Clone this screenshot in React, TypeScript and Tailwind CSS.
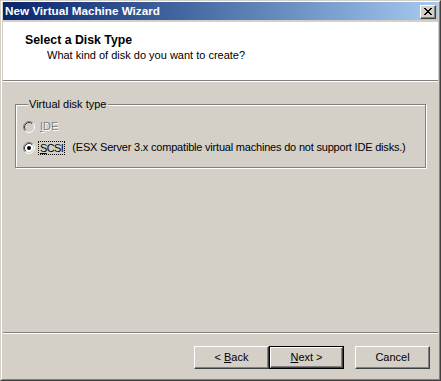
import React from "react";

function Radio({ checked, disabled }: { checked?: boolean; disabled?: boolean }) {
  return (
    <svg width="12" height="12" viewBox="0 0 12 12" className="shrink-0">
      <circle cx="6" cy="6" r="4.5" fill={disabled ? "#d4d0c8" : "#ffffff"} />
      <path d="M2.11 9.89A5.5 5.5 0 0 1 9.89 2.11" fill="none" stroke="#808080" />
      <path d="M9.89 2.11A5.5 5.5 0 0 1 2.11 9.89" fill="none" stroke="#ffffff" />
      <path d="M2.82 9.18A4.5 4.5 0 0 1 9.18 2.82" fill="none" stroke="#404040" />
      <path d="M9.18 2.82A4.5 4.5 0 0 1 2.82 9.18" fill="none" stroke="#d4d0c8" />
      {checked && <circle cx="6" cy="6" r="2" fill="#000" />}
    </svg>
  );
}

function CloseGlyph() {
  return (
    <svg width="8" height="7" viewBox="0 0 8 7" shapeRendering="crispEdges">
      <path
        d="M0 0h2v1H0zM6 0h2v1H6zM1 1h2v1H1zM5 1h2v1H5zM2 2h4v1H2zM3 3h2v1H3zM2 4h4v1H2zM1 5h2v1H1zM5 5h2v1H5zM0 6h2v1H0zM6 6h2v1H6z"
        fill="#000"
      />
    </svg>
  );
}

function Button({ children, isDefault }: { children: React.ReactNode; isDefault?: boolean }) {
  const face = (
    <div className="flex h-full w-full items-center justify-center border border-t-white border-l-white border-r-[#404040] border-b-[#404040] bg-[#d4d0c8] shadow-[inset_-1px_-1px_0_#808080] text-[11px] text-black">
      {children}
    </div>
  );
  if (isDefault) {
    return <div className="h-[23px] w-[75px] border border-black">{face}</div>;
  }
  return <div className="h-[23px] w-[75px]">{face}</div>;
}

export default function App() {
  return (
    <div
      className="h-[381px] w-[441px] border border-t-[#d4d0c8] border-l-[#d4d0c8] border-r-[#404040] border-b-[#404040] bg-[#d4d0c8] text-[11px] text-black"
      style={{ fontFamily: '"Liberation Sans", Arial, sans-serif' }}
    >
      <div className="flex h-full flex-col border border-t-white border-l-white border-r-[#808080] border-b-[#808080] px-px">
        {/* title bar */}
        <div className="flex h-[18px] items-center justify-between bg-gradient-to-r from-[#0a246a] to-[#a6caf0] pl-[2px] pr-[2px]">
          <span className="text-[11.7px] font-bold text-white">New Virtual Machine Wizard</span>
          <div className="mt-[1px] flex h-[14px] w-[16px] items-center justify-center border border-t-white border-l-white border-r-[#404040] border-b-[#404040] bg-[#d4d0c8] shadow-[inset_-1px_-1px_0_#808080]">
            <CloseGlyph />
          </div>
        </div>

        {/* header */}
        <div className="mt-[2px] h-[60px] border-b border-b-white bg-white">
          <div className="h-[59px] border-b border-b-[#808080] bg-white pl-[22px] pt-[11px]">
            <div className="text-[12.3px] font-bold leading-[15px]">Select a Disk Type</div>
            <div className="pl-[22px] leading-[14px]">What kind of disk do you want to create?</div>
          </div>
        </div>

        {/* body */}
        <div className="flex flex-1 flex-col">
          <div className="px-[12px] pt-[16px]">
            <fieldset className="border border-[#808080] pb-[13px] pl-[7px] pt-[9px] shadow-[inset_1px_1px_0_#fff,1px_1px_0_#fff]">
              <legend className="ml-[5px] bg-[#d4d0c8] pl-px pr-[2px] leading-[13px]">Virtual disk type</legend>
              <div className="flex flex-col gap-[8px]">
                <div className="flex h-[13px] items-center gap-[5px]">
                  <Radio disabled />
                  <span className="text-[#808080] [text-shadow:1px_1px_0_#fff]">
                    <u className="underline-offset-1">I</u>DE
                  </span>
                </div>
                <div className="flex h-[13px] items-center gap-[3px]">
                  <Radio checked />
                  <span className="border border-dotted border-black px-px leading-[12px] tracking-[-0.6px]">
                    <u className="underline-offset-1">S</u>CSI
                  </span>
                  <span className="ml-[4px] tracking-[-0.2px]">
                    (ESX Server 3.x compatible virtual machines do not support IDE disks.)
                  </span>
                </div>
              </div>
            </fieldset>
          </div>

          <div className="flex-1" />

          <div className="border-t border-t-[#808080]">
            <div className="flex justify-end border-t border-t-white pb-[10px] pr-[8px] pt-[12px]">
              <Button>
                &lt;&nbsp;<u className="underline-offset-1">B</u>ack
              </Button>
              <Button isDefault>
                <u className="underline-offset-1">N</u>ext &gt;
              </Button>
              <div className="w-[11px]" />
              <Button>Cancel</Button>
            </div>
          </div>
        </div>
      </div>
    </div>
  );
}
